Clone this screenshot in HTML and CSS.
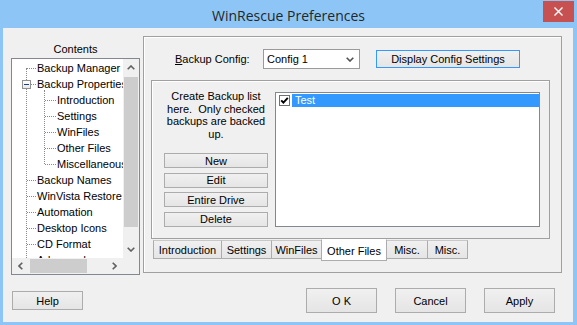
FILE: index.html
```html
<!DOCTYPE html>
<html>
<head>
<meta charset="utf-8">
<link rel="stylesheet" href="styles.css">
</head>
<body>
<div class="window">
  <div class="titlebar">
    <span></span>
    <span class="title">WinRescue Preferences</span>
    <span class="close-wrap"><span class="close"><svg width="9" height="9" viewBox="0 0 9 9"><path d="M0.5 0.5 L8.5 8.5 M8.5 0.5 L0.5 8.5" stroke="#fff" stroke-width="1.4" fill="none"/></svg></span></span>
  </div>
  <div class="client">
    <div class="main">
      <div class="contents">
        <div class="contents-label">Contents</div>
        <div class="treebox">
          <div class="tree-view">
            <ul class="tree">
              <li><div class="node"><span class="hl"></span>Backup Manager</div></li>
              <li>
                <div class="node node-open"><span class="toggle"><span class="minus"></span></span><span class="hl hl-short"></span>Backup Properties</div>
                <ul class="subtree">
                  <li><div class="node child"><span class="hl hl-child"></span>Introduction</div></li>
                  <li><div class="node child"><span class="hl hl-child"></span>Settings</div></li>
                  <li><div class="node child"><span class="hl hl-child"></span>WinFiles</div></li>
                  <li><div class="node child"><span class="hl hl-child"></span>Other Files</div></li>
                  <li><div class="node child"><span class="hl hl-child"></span>Miscellaneous</div></li>
                </ul>
              </li>
              <li><div class="node"><span class="hl"></span>Backup Names</div></li>
              <li><div class="node"><span class="hl"></span>WinVista Restore</div></li>
              <li><div class="node"><span class="hl"></span>Automation</div></li>
              <li><div class="node"><span class="hl"></span>Desktop Icons</div></li>
              <li><div class="node"><span class="hl"></span>CD Format</div></li>
              <li><div class="node"><span class="hl"></span>Advanced</div></li>
            </ul>
          </div>
          <div class="vbar">
            <div class="sb-btn"><svg width="8" height="5" viewBox="0 0 8 5"><polyline points="0.7,4.3 4,1 7.3,4.3" stroke="#606060" stroke-width="1.6" fill="none"/></svg></div>
            <div class="vtrack"><div class="vthumb"></div></div>
            <div class="sb-btn"><svg width="8" height="5" viewBox="0 0 8 5"><polyline points="0.7,0.7 4,4 7.3,0.7" stroke="#606060" stroke-width="1.6" fill="none"/></svg></div>
          </div>
          <div class="hbar">
            <div class="sb-btn"><svg width="5" height="8" viewBox="0 0 5 8"><polyline points="4.3,0.7 1,4 4.3,7.3" stroke="#606060" stroke-width="1.6" fill="none"/></svg></div>
            <div class="htrack"><div class="hthumb"></div></div>
            <div class="sb-btn"><svg width="5" height="8" viewBox="0 0 5 8"><polyline points="0.7,0.7 4,4 0.7,7.3" stroke="#606060" stroke-width="1.6" fill="none"/></svg></div>
          </div>
          <div class="corner"></div>
        </div>
      </div>
      <div class="panel">
        <div class="config-row">
          <label class="config-label"><u>B</u>ackup Config:</label>
          <div class="combo"><span>Config 1</span><svg width="8" height="5" viewBox="0 0 8 5"><polyline points="0.7,0.7 4,4 7.3,0.7" stroke="#505050" stroke-width="1.6" fill="none"/></svg></div>
          <button class="btn btn-focus display-btn">Display Config Settings</button>
        </div>
        <div class="group">
          <div class="group-left">
            <p class="hint">Create Backup list<br>here.&nbsp; Only checked<br>backups are backed<br>up.</p>
            <div class="side-buttons">
              <button class="btn side-btn">New</button>
              <button class="btn side-btn">Edit</button>
              <button class="btn side-btn">Entire Drive</button>
              <button class="btn side-btn">Delete</button>
            </div>
          </div>
          <div class="listbox">
            <div class="list-item">
              <span class="check"><svg width="9" height="9" viewBox="0 0 9 9"><path d="M1.2 4.3 L3.4 6.6 L7.8 1.8" stroke="#000" stroke-width="1.9" fill="none"/></svg></span>
              <span class="item-label">Test</span>
            </div>
          </div>
        </div>
        <div class="tabs">
          <div class="tab t-intro">Introduction</div>
          <div class="tab t-settings">Settings</div>
          <div class="tab t-winfiles">WinFiles</div>
          <div class="tab tab-active t-other">Other Files</div>
          <div class="tab t-misc1">Misc.</div>
          <div class="tab t-misc2">Misc.</div>
        </div>
      </div>
    </div>
    <div class="footer">
      <button class="btn foot-btn help-btn">Help</button>
      <div class="footer-right">
        <button class="btn foot-btn big-btn">O K</button>
        <button class="btn foot-btn big-btn">Cancel</button>
        <button class="btn foot-btn big-btn">Apply</button>
      </div>
    </div>
  </div>
</div>
</body>
</html>
```
FILE: styles.css
```css
* { box-sizing: border-box; }
html, body { margin: 0; padding: 0; }
body {
  font: 11px "Liberation Sans", Arial, sans-serif;
  color: #000;
  background: #8dc6f6;
}
.window {
  width: 577px;
  height: 325px;
  background: #8dc6f6;
  display: flex;
  flex-direction: column;
  overflow: hidden;
}
.titlebar {
  flex: none;
  height: 28px;
  display: grid;
  grid-template-columns: 1fr auto 1fr;
  align-items: start;
}
.title {
  font: 14px "Open Sans", "Noto Sans", sans-serif;
  color: #262626;
  line-height: 28px;
  padding-top: 2px;
  white-space: nowrap;
}
.close-wrap {
  justify-self: end;
  padding: 1px 3px 0 0;
}
.close {
  width: 31px;
  height: 21px;
  background: #c75050;
  display: flex;
  align-items: center;
  justify-content: center;
}
.client {
  flex: 1;
  margin: 0 4px 3px 3px;
  background: #f0f0f0;
  display: flex;
  flex-direction: column;
}
.main {
  display: flex;
  padding: 8px 0 0 8px;
  gap: 3px;
  align-items: flex-start;
}
.contents { width: 129px; }
.contents-label {
  height: 22px;
  padding-top: 6px;
  line-height: 14px;
  text-align: center;
}
.treebox {
  height: 217px;
  border: 1px solid #828790;
  background: #fff;
  display: grid;
  grid-template-columns: 111px 16px;
  grid-template-rows: 199px 16px;
}
.tree-view {
  overflow: hidden;
  padding-top: 1px;
  position: relative;
}
.tree, .subtree {
  list-style: none;
  margin: 0;
  padding: 0;
  position: relative;
}
.tree::before {
  content: "";
  position: absolute;
  left: 14px;
  top: 8px;
  bottom: -20px;
  border-left: 1px dotted #8a8a8a;
}
.subtree::before {
  content: "";
  position: absolute;
  left: 32px;
  top: -2px;
  bottom: 8px;
  border-left: 1px dotted #8a8a8a;
}
.node {
  height: 16px;
  display: flex;
  align-items: center;
  white-space: nowrap;
  padding-left: 15px;
  position: relative;
}
.node.child { padding-left: 33px; }
.node.node-open { padding-left: 10px; }
.hl {
  flex: none;
  width: 9px;
  height: 0;
  border-top: 1px dotted #8a8a8a;
  margin-right: 1px;
}
.hl.hl-short { width: 5px; }
.hl.hl-child { width: 11px; }
.toggle {
  flex: none;
  width: 9px;
  height: 9px;
  border: 1px solid #919191;
  background: linear-gradient(#fff, #e6e6e6);
  display: flex;
  align-items: center;
  justify-content: center;
  position: relative;
  z-index: 1;
}
.minus {
  width: 5px;
  height: 1px;
  background: #1e3c8a;
}
.vbar {
  background: #f0f0f0;
  display: flex;
  flex-direction: column;
}
.hbar {
  background: #f0f0f0;
  display: flex;
}
.corner { background: #f0f0f0; }
.sb-btn {
  flex: none;
  width: 16px;
  height: 17px;
  display: flex;
  align-items: center;
  justify-content: center;
}
.hbar .sb-btn { width: 17px; height: 16px; }
.vtrack { flex: 1; padding: 1px 1px 0 1px; }
.vthumb { height: 150px; background: #cdcdcd; }
.htrack { flex: 1; padding: 1px 0 1px 1px; }
.hthumb { width: 57px; height: 100%; background: #cdcdcd; }

.panel {
  width: 419px;
  height: 237px;
  border: 1px solid #a0a0a0;
  box-shadow: inset 1px 1px 0 #fff;
  padding: 12px 0 0 7px;
}
.config-row {
  display: flex;
  align-items: center;
  height: 20px;
}
.config-label {
  width: 112px;
  padding-left: 24px;
  white-space: nowrap;
}
.combo {
  width: 97px;
  height: 20px;
  border: 1px solid #9a9a9a;
  background: #fff;
  display: flex;
  align-items: center;
  justify-content: space-between;
  padding: 0 5px 0 3px;
}
.btn {
  font: 11px "Liberation Sans", Arial, sans-serif;
  color: #000;
  border: 1px solid #acacac;
  background: linear-gradient(#f0f0f0, #e5e5e5);
  padding: 0;
  margin: 0;
  display: flex;
  align-items: center;
  justify-content: center;
  white-space: nowrap;
}
.btn-focus { border-color: #3399ff; }
.display-btn {
  width: 144px;
  height: 18px;
  margin-left: 16px;
}
.group {
  margin-top: 11px;
  width: 399px;
  height: 159px;
  border: 1px solid #a0a0a0;
  box-shadow: inset 1px 1px 0 #fff;
  display: flex;
  align-items: flex-start;
}
.group-left {
  width: 123px;
  padding-top: 9px;
}
.hint {
  margin: 0;
  line-height: 12.5px;
  text-align: center;
  padding-left: 5px;
  white-space: nowrap;
}
.side-buttons {
  margin-top: 13px;
  padding-left: 12px;
  display: flex;
  flex-direction: column;
  gap: 4.5px;
}
.side-btn {
  width: 104px;
  height: 15px;
}
.listbox {
  margin-top: 11px;
  width: 265px;
  height: 135px;
  border: 1px solid #828790;
  background: #fff;
  padding-top: 1px;
}
.list-item {
  display: flex;
  align-items: center;
  height: 13px;
  padding-left: 3px;
}
.check {
  flex: none;
  width: 11px;
  height: 11px;
  border: 1px solid #707070;
  background: #fff;
  display: flex;
  align-items: center;
  justify-content: center;
  margin-right: 2px;
}
.item-label {
  flex: 1;
  height: 13px;
  line-height: 13px;
  background: #3399ff;
  color: #fff;
  padding-left: 3px;
}
.tabs {
  display: flex;
  align-items: flex-start;
  padding-left: 2px;
}
.tab {
  height: 19px;
  margin-top: 1px;
  margin-left: -1px;
  border: 1px solid #acacac;
  border-top-color: #c8c8c8;
  background: linear-gradient(#f0f0f0, #e5e5e5);
  text-align: center;
  line-height: 18px;
  white-space: nowrap;
}
.tab:first-child { margin-left: 0; }
.tab-active {
  height: 22px;
  margin-top: 0;
  background: #fff;
  border-top-color: #fff;
  line-height: 23px;
  position: relative;
  z-index: 1;
}
.t-intro { width: 69px; }
.t-settings { width: 51px; }
.t-winfiles { width: 51px; }
.t-other { width: 66px; }
.t-misc1 { width: 42px; }
.t-misc2 { width: 41px; }

.footer {
  margin-top: 13px;
  height: 25px;
  display: flex;
  align-items: center;
  justify-content: space-between;
  padding: 0 18px 0 9px;
}
.footer-right {
  display: flex;
  gap: 18px;
}
.help-btn { width: 71px; height: 19px; }
.big-btn { width: 71px; height: 25px; }
```
